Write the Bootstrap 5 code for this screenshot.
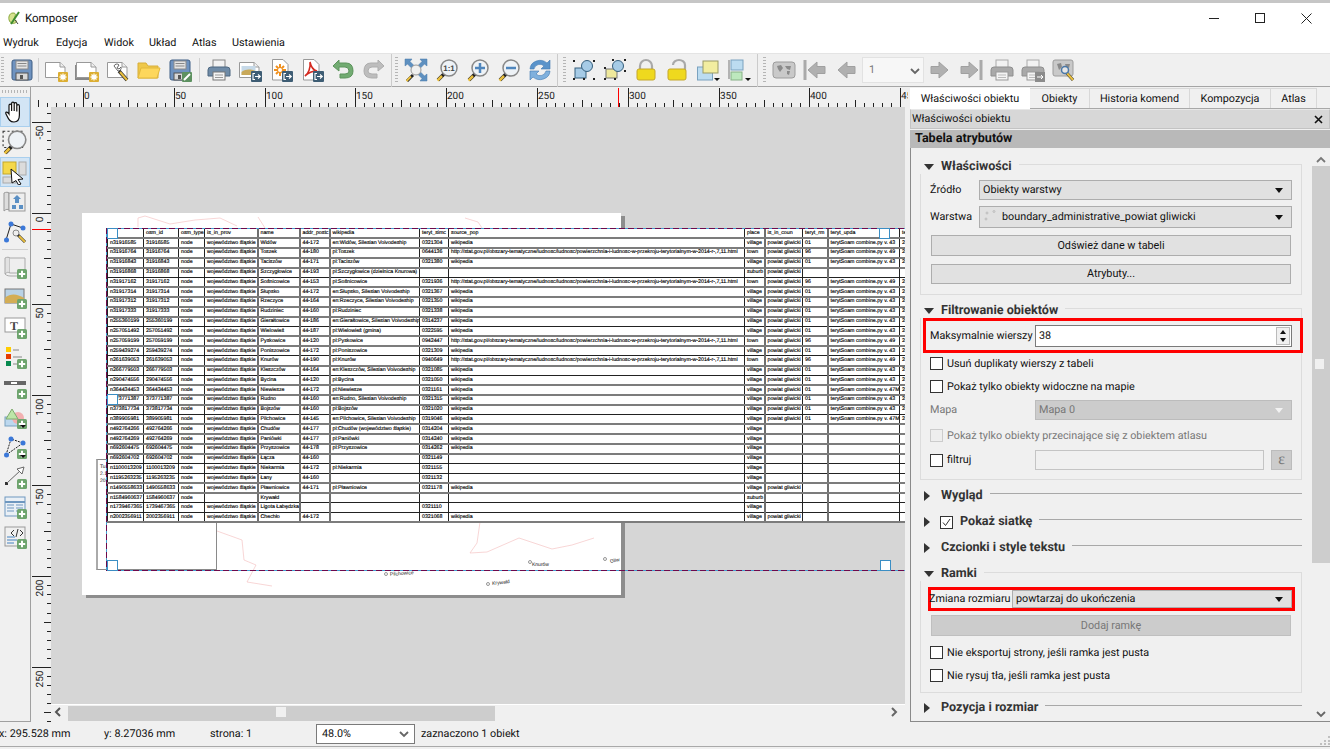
<!DOCTYPE html>
<html lang="pl">
<head>
<meta charset="utf-8">
<title>Komposer</title>
<link href="https://cdn.jsdelivr.net/npm/bootstrap@5.3.3/dist/css/bootstrap.min.css" rel="stylesheet">
<style>
  html, body { height: 749px; overflow: hidden; }
  body { background: #f0f0f0; color: #111; font: 10.8px/14px Roboto, "Noto Sans", sans-serif; text-rendering: geometricPrecision; }

  .win-top { height: 36px; background: #fff; border-top: 3px solid #c6c6c6; padding: 0 1px 3px 7px; }
  .win-top .ttl { margin-left: 4px; font-size: 11.5px; }
  .win-btns { margin-left: auto; }
  .win-btns span { width: 46px; height: 30px; display: flex; align-items: center; justify-content: center; }
  .menu-bar { height: 17px; background: #fff; padding: 0 0 3px 3px; }
  .mi-1 { width: 53px; } .mi-2 { width: 48px; } .mi-3 { width: 45px; } .mi-4 { width: 43px; } .mi-5 { width: 40px; }

  .tool-bar { height: 34px; border-top: 1px solid #e4e4e4; border-bottom: 1px solid #a5a5a5; }
  .grip { width: 3px; height: 26px; margin: 0 2px 0 1px; background: repeating-linear-gradient(#b5b5b5 0 1px, transparent 1px 3px); flex: none; }
  .tb { width: 31px; height: 28px; display: flex; align-items: center; justify-content: center; flex: none; }
  .vsep { width: 1px; height: 24px; background: #cfcfcf; margin: 0 1px; flex: none; }
  .vsep.wide { margin: 0 3.5px; }
  .tb-end { width: 1px; height: 33px; background: #cbcbcb; margin: 0 2px; flex: none; }
  .tb-end.e2 { margin: 0 4px 0 2px; }
  .tb-end.e3 { margin: 0 4px 0 3px; }
  .page-spin { width: 62px; height: 26px; background: #f7f7f7; border: 1px solid #e2e2e2; color: #777; padding: 5px 0 0 6px; position: relative; flex: none; margin-left: 1px; }
  .spin-chev { position: absolute; right: 3px; top: 8px; }

  .main-row { height: 635px; }
  .side-bar { width: 31px; border-right: 1px solid #a0a0a0; border-bottom: 1px solid #a0a0a0; flex: none; }
  .side-grip { height: 3px; margin: 3px 2px 4px; background: repeating-linear-gradient(90deg, #b5b5b5 0 1px, transparent 1px 3px); }
  .sb { height: 30px; width: 30px; display: flex; align-items: center; justify-content: center; border: 1px solid transparent; }
  .sb.on { background: #d3e5f5; border-color: #a9cfee; }
  .side-sep { height: 1px; background: #d0d0d0; margin: 2px; }

  .center-col { width: 877px; flex: none; }
  .ruler-top { height: 20px; display: block; }
  .ruler-left { width: 20px; height: 615px; display: block; flex: none; }
  .canvas-area { width: 854px; height: 598px; background: #d6d6d6; border-bottom: 1px solid #fff; position: relative; overflow: hidden; }
  .h-scroll { height: 15px; width: 854px; position: relative; }
  .h-track { position: absolute; left: 17px; top: 1px; width: 427px; height: 15px; background: #cdcdcd; }
  .h-thumb { position: absolute; left: 225px; top: 2px; width: 10px; height: 10px; background: #f0f0f0; }
  .h-l, .h-r { position: absolute; top: 0; }
  .h-l { left: 2px; } .h-r { left: 838px; }

  .sheet { position: absolute; left: 31px; top: 106px; width: 539px; height: 382px; background: #fff; box-shadow: 4px 3px 0 #8d8d8d; }
  .map-lines { position: absolute; left: 0; top: 0; }
  .legend-box { position: absolute; left: 45px; top: 352px; width: 121px; height: 111px; background: #fff; border: 1px solid #8a8a8a; border-left: 2px solid #aaa; font: 5px/7px "Liberation Sans", sans-serif; padding: 4px 0 0 2px; }
  .attr-wrap { position: absolute; left: 56px; top: 121px; }
  .attr-tbl { table-layout: fixed; width: 818px; background: #fff; font: 5.25px/7px "Liberation Sans", sans-serif; color: #000; -webkit-text-stroke: .15px #000; }
  .attr-tbl td { height: 9.8px; padding: 0 0 0 2px; border-right: 1px solid #222; border-bottom: 1px solid #222; white-space: nowrap; overflow: hidden; }
  .attr-tbl tr.gl td { border-bottom: 2px solid #7c7c7c; }
  .attr-tbl td:nth-child(4), .attr-tbl td:nth-child(5), .attr-tbl td:nth-child(6), .attr-tbl td:nth-child(10), .attr-tbl td:nth-child(12) { border-right-color: #6f6f6f; border-right-width: 2px; }
  .attr-tbl tr:first-child td { border-top: 1px solid #222; }
  .attr-tbl td:first-child { border-left: 1px solid #222; }
  .sel-h, .sel-v { position: absolute; }
  .sel-h { height: 1px; left: 55px; width: 800px; background: repeating-linear-gradient(90deg, #6d0a4c 0 6px, #43a0d0 6px 9px); }
  .sel-h.top { top: 121px; } .sel-h.bot { top: 463px; }
  .sel-v { width: 1px; left: 55px; top: 121px; height: 342px; background: repeating-linear-gradient(#6d0a4c 0 6px, #43a0d0 6px 9px); }
  .handle { position: absolute; width: 11px; height: 11px; background: #fff; border: 1px solid #3b8ec4; }
  .hd-tl { left: 56px; top: 121px; } .hd-ml { left: 56px; top: 287px; } .hd-bl { left: 56px; top: 453px; }
  .hd-tr { left: 828px; top: 121px; } .hd-br { left: 829px; top: 453px; }
  .map-txt { position: absolute; font: 5px/6px "Liberation Sans", sans-serif; color: #111; white-space: nowrap; }
  .mt-a { left: 339px; top: 464px; transform: rotate(-4deg); }
  .mt-b { left: 441px; top: 473px; transform: rotate(-6deg); }
  .mt-c { left: 481px; top: 455px; }
  .mt-d { left: 559px; top: 451px; transform: rotate(-10deg); }

  .dock { width: 422px; padding-left: 2px; flex: none; }
  .dock-tabs { height: 21px; margin-top: 1px; border-bottom: 1px solid #a8a8a8; }
  .dtab { height: 20px; display: flex; align-items: center; justify-content: center; border: 1px solid #d8d8d8; border-bottom: 0; border-left: 0; flex: none; }
  .dtab.act { background: #fff; border: 0; height: 21px; }
  .dt-1 { width: 120px; } .dt-2 { width: 60px; } .dt-3 { width: 100px; } .dt-4 { width: 81px; } .dt-5 { width: 46px; }
  .dock-head { height: 20px; background: #d7d7d7; border: 1px solid #c3c3c3; border-top-color: #e8e8e8; padding: 0 6px 0 1px; }
  .dock-title { height: 18px; margin-top: 1px; background: #b9b9b9; font-weight: 700; font-size: 12.6px; padding-left: 5px; }
  .dock-body { height: 574px; border-left: 1px solid #8a8a8a; border-bottom: 1px solid #8a8a8a; overflow: hidden; }
  .dock-scroll { width: 401px; padding-top: 16px; flex: none; }
  .v-scroll { width: 18px; position: relative; flex: none; }
  .v-track { position: absolute; left: 0; top: 18px; width: 18px; height: 397px; background: #cdcdcd; }
  .v-thumb { position: absolute; left: 3px; top: 211px; width: 9px; height: 10px; background: #f0f0f0; }
  .v-up, .v-dn { position: absolute; left: 4px; }
  .v-up { top: 7px; } .v-dn { top: 561px; }

  .grp { margin-left: 9px; width: 382px; border: 1px solid #dcdcdc; }
  .sect { height: 14px; font-weight: 700; font-size: 12.6px; color: #333; background: #f0f0f0; width: fit-content; padding: 0 7px 0 2px; margin: -5px 0 0 -1px; position: relative; }
  .sect.up { margin-top: -6px; }
  .tri-d { width: 0; height: 0; border: 5.5px solid transparent; border-top: 6px solid #333; border-bottom: 0; margin: 0 7px 0 2px; }
  .sect-row { height: 14px; margin-left: 13px; font-weight: 700; font-size: 12.6px; color: #333; width: 378px; }
  .tri-r { width: 0; height: 0; border: 5.5px solid transparent; border-left: 6.5px solid #333; border-right: 0; margin-right: 11px; flex: none; }
  .sect-line { flex: 1; height: 1px; background: #a8a8a8; margin: -5px 0 0 7px; }
  .frow { margin: 0 9px; }
  .inset { margin-left: 10px; margin-right: 10px; }
  .tm-4 { margin-top: 4px; } .tm-6 { margin-top: 6px; } .tm-7 { margin-top: 7px; } .tm-8 { margin-top: 8px; } .tm-9 { margin-top: 9px; }
  .tm-10 { margin-top: 10px; } .tm-12 { margin-top: 12px; } .tm-13 { margin-top: 13px; } .tm-17 { margin-top: 17px; }
  .bm-9 { margin-bottom: 9px; } .bm-10 { margin-bottom: 10px; }
  .lbl-s { width: 49px; flex: none; } .lbl-m { width: 105px; flex: none; }
  .combo { height: 20px; background: #e1e1e1; border: 1px solid #adadad; padding: 0 5px 0 3px; }
  .combo.h22 { height: 22px; } .combo.h18 { height: 18px; }
  .combo .fill { flex: 1; }
  .layer-ico { margin-right: 5px; flex: none; }
  .caret-d { width: 0; height: 0; border: 4.5px solid transparent; border-top: 5px solid #111; border-bottom: 0; margin-right: 3px; }
  .combo.off { background: #ccc; border-color: #bcbcbc; color: #777; }
  .combo.off .caret-d { border-top-color: #f2f2f2; }
  .qbtn.btn { display: block; height: 21px; width: 100%; padding: 0; border: 1px solid #adadad; border-radius: 0; background: #e1e1e1; color: #111; font-size: 10.8px; line-height: 18px; opacity: 1; }
  .qbtn.btn.h20 { height: 20px; }
  .qbtn.btn:disabled { background: #ccc; border-color: #bfbfbf; color: #777; }
  .red-a { height: 35px; width: 380px; margin-left: 2px; border: 3px solid #f00; padding: 0 8px 0 4px; white-space: nowrap; }
  .red-b { height: 24px; width: 367px; margin-left: 7px; border: 3px solid #f00; }
  .red-lbl { width: 83px; margin-left: -2px; white-space: nowrap; flex: none; }
  .spin { width: 257px; height: 22px; background: #fff; border: 1px solid #7a7a7a; padding-left: 3px; position: relative; margin-left: auto; flex: none; }
  .spin-ud { position: absolute; right: 1px; top: 1px; width: 14px; height: 18px; border: 1px solid #bbb; background: #f0f0f0; display: flex; flex-direction: column; align-items: center; justify-content: space-around; }
  .up-m { border: 3.5px solid transparent; border-bottom: 4px solid #111; border-top: 0; }
  .dn-m { border: 3.5px solid transparent; border-top: 4px solid #111; border-bottom: 0; }
  .qcheck.form-check-input { width: 13px; height: 13px; margin: 0 4px 0 0; border: 1px solid #333; border-radius: 0; background-color: #fff; flex: none; }
  .qcheck.form-check-input:disabled { opacity: 1; border-color: #ccc; background-color: #eee; }
  .chk-row { height: 13px; }
  .is-off { color: #787878; }
  .tick-box { width: 13px; height: 13px; border: 1px solid #333; background: #fff; flex: none; margin: 0 7px 0 -1px; display: flex; }
  .f-input { width: 229px; height: 20px; background: #f0f0f0; border: 1px solid #c4c4c4; margin-left: auto; flex: none; }
  .eps { width: 21px; height: 20px; margin-left: 7px; background: #ccc; border: 1px solid #bcbcbc; color: #777; font: 16px/17px "Liberation Serif", serif; text-align: center; flex: none; }

  .status-bar { height: 25px; border-bottom: 1px solid #a9a9a9; position: relative; }
  .status-bar > span { white-space: nowrap; }
  .st-x { margin-left: -1px; width: 105px; } .st-y { width: 106px; } .st-p { width: 106px; }
  .zoom-combo { width: 99px; height: 20px; background: #fff; border: 1px solid #7a7a7a; padding-left: 5px; margin-right: 6px; }
  .chev { margin-left: auto; margin-right: 5px; }
  .size-grip { position: absolute; right: 0; bottom: 1px; }
</style>
</head>
<body>

<!-- icon set -->
<svg width="0" height="0" class="position-absolute">
  <defs>
    <symbol id="floppy" viewBox="0 0 24 24"><rect x="2" y="2" width="20" height="20" rx="2" fill="#6f93c0" stroke="#3f5f85"/><rect x="6" y="3" width="12" height="8" fill="#e4e4e4" stroke="#8a8a8a"/><path d="M7.5 5.5h9M7.5 8h9" stroke="#888"/><rect x="6" y="15" width="12" height="7" fill="#d8d8d8" stroke="#555"/><rect x="10" y="17" width="3" height="4" fill="#555"/></symbol>
    <symbol id="sheet" viewBox="0 0 24 24"><path d="M1.500 4.500H16L21 9V19.500H1.500Z" fill="#fff" stroke="#999"/><path d="M16 4.500V9H21" fill="#eee" stroke="#999"/></symbol>
    <symbol id="b-star" viewBox="0 0 24 24"><rect x="14" y="14" width="10" height="10" rx="1" fill="#dcae32"/><path d="M19 15.500V22.500M15.500 19H22.500M16.500 16.500L21.500 21.500M21.500 16.500L16.500 21.500" stroke="#fff" stroke-width="1.300"/></symbol>
    <symbol id="b-out" viewBox="0 0 24 24"><rect x="13" y="13" width="11" height="11" rx="1" fill="#3e5d74"/><path d="M17 15.500H15V21.500H17M17 18.500H22M20 16.500L22.300 18.500L20 20.500" fill="none" stroke="#fff" stroke-width="1.100"/></symbol>
    <symbol id="b-plus" viewBox="0 0 24 24"><rect x="14" y="14" width="10" height="10" rx="1.500" fill="#6ea46e"/><path d="M19 15.800V22.200M15.800 19H22.200" stroke="#fff" stroke-width="2"/></symbol>
    <symbol id="lens" viewBox="0 0 24 24"><path d="M3 22L9 16" stroke="#222" stroke-width="3.500"/><path d="M2.500 22.500L7 18" stroke="#e9bf3f" stroke-width="2.500"/><circle cx="14" cy="10" r="8" fill="#eef2f6" stroke="#888" stroke-width="1.500"/></symbol>
    <symbol id="printer" viewBox="0 0 24 24"><rect x="6" y="2" width="12" height="8" fill="#f2f2f2" stroke="#888"/><path d="M4 9H20Q23 9 23 12V18H1V12Q1 9 4 9Z" fill="#6f8ba7" stroke="#4d6780"/><rect x="6" y="14" width="12" height="8" fill="#f4f4f4" stroke="#777"/><path d="M8 17H16M8 19.500H16" stroke="#999"/></symbol>
    <symbol id="printer-g" viewBox="0 0 24 24"><rect x="6" y="2" width="12" height="8" fill="#f2f2f2" stroke="#aaa"/><path d="M4 9H20Q23 9 23 12V18H1V12Q1 9 4 9Z" fill="#a9a9a9" stroke="#8f8f8f"/><rect x="6" y="14" width="12" height="8" fill="#f4f4f4" stroke="#999"/><path d="M8 17H16M8 19.500H16" stroke="#bbb"/></symbol>
    <symbol id="padlock" viewBox="0 0 24 24"><path d="M6 12V8A6 6 0 0 1 18 8V12" fill="none" stroke="#a9a9a9" stroke-width="2.200"/><rect x="3" y="11" width="18" height="11" rx="2" fill="#efd91e" stroke="#c5a72a"/></symbol>
    <symbol id="padlock-o" viewBox="0 0 24 24"><path d="M8 7A6 5 0 0 1 20 7V12H15" fill="none" stroke="#a9a9a9" stroke-width="2.200"/><rect x="3" y="11" width="18" height="11" rx="2" fill="#efd91e" stroke="#c5a72a"/></symbol>
    <symbol id="nav-l" viewBox="0 0 24 24"><path d="M4 12L13 4V8.500H21V15.500H13V20Z" fill="#b0b0b0" stroke="#a0a0a0"/></symbol>
    <symbol id="nav-first" viewBox="0 0 24 24"><path d="M2 2V22" stroke="#aaa" stroke-width="3"/><path d="M5 12L14 4V8.500H22V15.500H14V20Z" fill="#b0b0b0" stroke="#a0a0a0"/></symbol>
    <symbol id="nav-r" viewBox="0 0 24 24"><path d="M20 12L11 4V8.500H3V15.500H11V20Z" fill="#b0b0b0" stroke="#a0a0a0"/></symbol>
    <symbol id="nav-last" viewBox="0 0 24 24"><path d="M22 2V22" stroke="#aaa" stroke-width="3"/><path d="M19 12L10 4V8.500H2V15.500H10V20Z" fill="#b0b0b0" stroke="#a0a0a0"/></symbol>
    <symbol id="chev-l" viewBox="0 0 10 10"><path d="M7 1L3 5L7 9" fill="none" stroke="#555" stroke-width="2"/></symbol>
    <symbol id="chev-r" viewBox="0 0 10 10"><path d="M3 1L7 5L3 9" fill="none" stroke="#666" stroke-width="2"/></symbol>
    <symbol id="chev-u" viewBox="0 0 10 10"><path d="M1 7L5 3L9 7" fill="none" stroke="#777" stroke-width="1.800"/></symbol>
    <symbol id="chev-d" viewBox="0 0 10 10"><path d="M1 3L5 7L9 3" fill="none" stroke="#666" stroke-width="1.800"/></symbol>
  </defs>
</svg>

<!-- window title -->
<div class="win-top d-flex align-items-center">
  <svg width="14" height="16" viewBox="0 0 14 16"><path d="M6 3C2 3 1 8 2.500 11C4 14 8 14 10 11.500L7 9C8 6 10 3 6 3Z" fill="#d5e28f" stroke="#8aa83a"/><path d="M4 14L12 2" stroke="#3d8b2f" stroke-width="2"/><path d="M11 14L8 10" stroke="#444"/></svg>
  <span class="ttl">Komposer</span>
  <div class="win-btns d-flex">
    <span><svg width="11" height="11"><path d="M0 5.500H10" stroke="#222"/></svg></span>
    <span><svg width="11" height="11"><rect x=".5" y=".5" width="9" height="9" fill="none" stroke="#222"/></svg></span>
    <span><svg width="11" height="11"><path d="M.5 .5L10.500 10.500M10.500 .5L.5 10.500" stroke="#222"/></svg></span>
  </div>
</div>

<!-- menu -->
<div class="menu-bar d-flex align-items-center">
  <span class="mi-1">Wydruk</span>
  <span class="mi-2">Edycja</span>
  <span class="mi-3">Widok</span>
  <span class="mi-4">Układ</span>
  <span class="mi-5">Atlas</span>
  <span>Ustawienia</span>
</div>

<!-- main toolbar -->
<div class="tool-bar d-flex align-items-center">
  <i class="grip"></i>
  <div class="tb"><svg width="24" height="24"><use href="#floppy"/></svg></div>
  <i class="vsep"></i>
  <div class="tb"><svg width="24" height="24"><use href="#sheet"/><use href="#b-star"/></svg></div>
  <div class="tb"><svg width="24" height="24"><path d="M1 7V21H17" fill="none" stroke="#888" stroke-width="2"/><use href="#sheet"/><use href="#b-star"/></svg></div>
  <div class="tb"><svg width="24" height="24"><use href="#sheet"/><path d="M8 8A3 3 0 0 1 13 7L11 10L13 11L15 9A3 3 0 0 1 12 13Z" fill="#fff" stroke="#666"/><path d="M13 13L21 22" stroke="#333" stroke-width="3.500"/><path d="M14 14L21 22" stroke="#e9bf3f" stroke-width="2"/></svg></div>
  <div class="tb"><svg width="24" height="24"><path d="M1 5H9L11 8H21V20H1Z" fill="#efc84a" stroke="#d8ae3a"/><path d="M4 10H23L20 20H1Z" fill="#fdd75c" stroke="#e2b93d"/></svg></div>
  <div class="tb"><svg width="24" height="24"><use href="#floppy"/><rect x="14" y="14" width="10" height="10" rx="1" fill="#5d9160"/><path d="M16 22L22 16" stroke="#fff" stroke-width="2"/></svg></div>
  <i class="vsep wide"></i>
  <div class="tb"><svg width="24" height="24"><use href="#printer"/></svg></div>
  <div class="tb"><svg width="24" height="24"><use href="#sheet"/><rect x="3.500" y="8" width="14" height="9" fill="#c6d9e8"/><path d="M3.500 17V14C8 11 12 11 17.500 13V17Z" fill="#c9a95a"/><use href="#b-out"/></svg></div>
  <div class="tb"><svg width="24" height="24"><path d="M3.500 1.500H14L19 6.500V22H3.500Z" fill="#fff" stroke="#999"/><g stroke="#f0901e" stroke-width="2"><path d="M11 6V18M5 12H17M7 8L15 16M15 8L7 16"/></g><circle cx="11" cy="12" r="2" fill="#fff"/><use href="#b-out"/></svg></div>
  <div class="tb"><svg width="24" height="24"><path d="M3.500 1.500H14L19 6.500V22H3.500Z" fill="#fff" stroke="#999"/><path d="M10 4C11 10 8 16 5 18C9 14 13 13 17 13C13 12 11 9 10 4Z" fill="none" stroke="#d42a20" stroke-width="1.600"/><use href="#b-out"/></svg></div>
  <div class="tb"><svg width="24" height="24"><path d="M2 8L8 2V5H15Q22 5 22 13Q22 20 14 20H9V16H14Q18 16 18 13Q18 9 14 9H8V13Z" fill="#72ab72" stroke="#5c945c"/></svg></div>
  <div class="tb"><svg width="24" height="24"><path d="M22 8L16 2V5H9Q2 5 2 13Q2 20 10 20H15V16H10Q6 16 6 13Q6 9 10 9H16V13Z" fill="#bdbdbd" stroke="#adadad"/></svg></div>
  <i class="tb-end"></i>
  <i class="grip"></i>
  <div class="tb"><svg width="24" height="24"><path d="M1 1H8L6 3.500L10 7.500L7.500 10L3.500 6L1 8ZM23 1V8L20.500 6L16.500 10L14 7.500L18 3.500L16 1ZM23 23H16L18 20.500L14 16.500L16.500 14L20.500 18L23 16Z" fill="#5e90c0" stroke="#4878a8" stroke-width=".5"/><path d="M3 23L9 17" stroke="#222" stroke-width="3"/><path d="M2.500 23L7 18.500" stroke="#e9bf3f" stroke-width="2"/><circle cx="12" cy="12" r="5" fill="#f0f0f0" stroke="#999"/></svg></div>
  <div class="tb"><svg width="24" height="24"><use href="#lens"/><text x="14" y="13" font-size="8" font-weight="700" text-anchor="middle" font-family="Liberation Sans" fill="#444">1:1</text></svg></div>
  <div class="tb"><svg width="24" height="24"><use href="#lens"/><path d="M14 5V15M9 10H19" stroke="#4f86bd" stroke-width="2.500"/></svg></div>
  <div class="tb"><svg width="24" height="24"><use href="#lens"/><path d="M9 10H19" stroke="#4f86bd" stroke-width="2.500"/></svg></div>
  <div class="tb"><svg width="24" height="24"><path d="M2 11A10 9 0 0 1 19 5L22 2V11H13L16 8A6 6 0 0 0 6 11Z" fill="#5a93ca" stroke="#3f79b2" stroke-width=".6"/><path d="M22 13A10 9 0 0 1 5 19L2 22V13H11L8 16A6 6 0 0 0 18 13Z" fill="#7fb0dd" stroke="#3f79b2" stroke-width=".6"/></svg></div>
  <i class="tb-end e2"></i>
  <i class="grip"></i>
  <div class="tb"><svg width="24" height="24"><rect x="3" y="10" width="11" height="10" fill="#a6cbe6" stroke="#37607e"/><circle cx="15" cy="8" r="5.500" fill="#a6cbe6" stroke="#37607e"/><path d="M1 2h2v2H1zM21 2h2v2h-2zM1 20h2v2H1zM21 20h2v2h-2zM11 20h2v2h-2z" fill="#222"/></svg></div>
  <div class="tb"><svg width="24" height="24"><rect x="3" y="11" width="11" height="9" fill="#efe99c" stroke="#777"/><circle cx="15" cy="8" r="5.500" fill="#a6cbe6" stroke="#37607e"/><path d="M1 9h2v2H1zM9 1h2v2H9zM21 1h2v2h-2zM1 20h2v2H1zM21 12h2v2h-2zM11 20h2v2h-2z" fill="#222"/></svg></div>
  <div class="tb"><svg width="24" height="24"><use href="#padlock"/></svg></div>
  <div class="tb"><svg width="24" height="24"><use href="#padlock-o"/></svg></div>
  <div class="tb"><svg width="24" height="24"><rect x="1.500" y="9" width="15" height="13" fill="#bcdcf0" stroke="#7aa2bf"/><rect x="7" y="3" width="15" height="12" fill="#f2eda0" stroke="#9a9a66"/><path d="M18 20H24L21 23Z" fill="#111"/></svg></div>
  <div class="tb"><svg width="24" height="24"><path d="M2 2V21" stroke="#777"/><rect x="4" y="2" width="12" height="10" fill="#bcdcf0" stroke="#7aa2bf"/><rect x="4" y="14" width="11" height="8" fill="#bde8bd" stroke="#86b086"/><path d="M18 20H24L21 23Z" fill="#111"/></svg></div>
  <i class="tb-end e3"></i>
  <i class="grip"></i>
  <div class="tb"><svg width="24" height="24"><rect x="1" y="4" width="22" height="16" rx="3" fill="#c9c9c9" stroke="#9c9c9c"/><path d="M5 8L9 7L11 10L8 14L6 11ZM13 8L19 8L18 12L15 11ZM15 13L18 13L17 17L15 16Z" fill="#8a8a8a"/></svg></div>
  <div class="tb"><svg width="24" height="24"><use href="#nav-first"/></svg></div>
  <div class="tb"><svg width="24" height="24"><use href="#nav-l"/></svg></div>
  <div class="page-spin">1<svg class="spin-chev" width="10" height="10"><use href="#chev-d"/></svg></div>
  <div class="tb"><svg width="24" height="24"><use href="#nav-r"/></svg></div>
  <div class="tb"><svg width="24" height="24"><use href="#nav-last"/></svg></div>
  <div class="tb"><svg width="24" height="24"><use href="#printer-g"/></svg></div>
  <div class="tb"><svg width="24" height="24"><use href="#printer-g"/><rect x="14" y="14" width="10" height="10" fill="#8b8b8b"/><path d="M16 19H22M20 17L22 19L20 21" fill="none" stroke="#fff"/></svg></div>
  <div class="tb"><svg width="24" height="24"><rect x="1" y="2" width="20" height="16" rx="2" fill="#c9c9c9" stroke="#9c9c9c"/><path d="M5 6L9 5L10 9L7 12ZM13 6H18L17 10L14 9Z" fill="#8a8a8a"/><path d="M13 13L21 22" stroke="#333" stroke-width="3"/><path d="M14 14L21 22" stroke="#e9bf3f" stroke-width="2"/><circle cx="13" cy="12" r="3.500" fill="#e6e6e6" stroke="#4a78a8" stroke-width="1.500"/></svg></div>
</div>

<div class="main-row d-flex">
  <!-- left tools -->
  <div class="side-bar">
    <div class="side-grip"></div>
    <div class="sb on"><svg width="24" height="24" viewBox="0 0 24 24"><path d="M6 12V5.500A1.300 1.300 0 0 1 8.600 5.500V11V3.500A1.300 1.300 0 0 1 11.200 3.500V11V4A1.300 1.300 0 0 1 13.800 4V11.500V6A1.300 1.300 0 0 1 16.400 6V15C16.400 19 15 22 11 22C7 22 6 20 3 14C2 12 4 11 6 14Z" fill="#fff" stroke="#111" stroke-width="1.200"/></svg></div>
    <div class="sb"><svg width="26" height="26" viewBox="0 0 24 24"><rect x="1" y="2" width="18" height="15" fill="none" stroke="#333" stroke-dasharray="2 2"/><use href="#lens"/></svg></div>
    <div class="sb on"><svg width="26" height="26" viewBox="0 0 26 26"><rect x="1" y="3" width="13" height="12" fill="#f4d84a" stroke="#c5a72a"/><rect x="17" y="3" width="7" height="13" fill="#dcdcdc" stroke="#aaa"/><rect x="1" y="18" width="13" height="6" fill="#dcdcdc" stroke="#aaa"/><path d="M9 10L21 20L16 20.500L19 25L16.500 26L14 21.500L10 24Z" fill="#fff" stroke="#111"/></svg></div>
    <div class="sb"><svg width="24" height="24" viewBox="0 0 24 24"><path d="M1 3C3 2 5 2 6 3V20C5 19 3 19 1 21Z" fill="#ddd" stroke="#999"/><rect x="6" y="3" width="16" height="18" fill="#eee" stroke="#999"/><path d="M14 5L18 9H16V13H12V9H10Z" fill="#5a8fc4"/><path d="M9 15h4v4H9zM16 15h4v4h-4z" fill="#5a8fc4"/></svg></div>
    <div class="sb"><svg width="24" height="24" viewBox="0 0 24 24"><path d="M3 20L8 4L20 8" fill="none" stroke="#222"/><circle cx="3.500" cy="20" r="2.500" fill="#3b78d8"/><circle cx="8" cy="4" r="2.500" fill="#3b78d8"/><circle cx="20" cy="8" r="2.500" fill="#3b78d8"/><circle cx="13" cy="13" r="3" fill="#eee" stroke="#888"/><path d="M15 15L22 22" stroke="#333" stroke-width="3"/><path d="M16 16L22 22" stroke="#e9bf3f" stroke-width="2"/></svg></div>
    <div class="side-sep"></div>
    <div class="sb"><svg width="24" height="24" viewBox="0 0 24 24"><path d="M2 3C4 2 6 2 7 3V18C5 17 4 17 2 19Z" fill="#e2e2e2" stroke="#aaa"/><path d="M7 3H22V18H7" fill="#eee" stroke="#aaa"/><path d="M2 19C4 21 6 21 9 21H22" fill="none" stroke="#aaa"/><use href="#b-plus"/></svg></div>
    <div class="sb"><svg width="24" height="24" viewBox="0 0 24 24"><rect x="2" y="4" width="19" height="14" fill="#b9d2e6" stroke="#777"/><path d="M2 18V13C8 8 14 9 21 13V18Z" fill="#d3ad55"/><use href="#b-plus"/></svg></div>
    <div class="sb"><svg width="24" height="24" viewBox="0 0 24 24"><rect x="2" y="3" width="20" height="14" fill="#fff" stroke="#999"/><text x="11" y="14.500" font-size="12" font-weight="700" text-anchor="middle" font-family="Liberation Serif" fill="#444">T</text><use href="#b-plus"/></svg></div>
    <div class="sb"><svg width="24" height="24" viewBox="0 0 24 24"><rect x="3" y="2" width="5" height="5" fill="#fc0"/><rect x="3" y="9" width="5" height="5" fill="#e63b00"/><rect x="3" y="16" width="5" height="5" fill="#078a4f"/><path d="M10 5H16M10 12H19M10 19H14" stroke="#aaa" stroke-width="1.500"/><use href="#b-plus"/></svg></div>
    <div class="sb"><svg width="24" height="24" viewBox="0 0 24 24"><rect x="1" y="6" width="22" height="4" fill="#666"/><path d="M8 8H14" stroke="#fff" stroke-width="2"/><use href="#b-plus"/></svg></div>
    <div class="sb"><svg width="24" height="24" viewBox="0 0 24 24"><rect x="2" y="12" width="16" height="9" fill="#bcd8ef" stroke="#7aa2bf"/><circle cx="15" cy="13" r="6" fill="#f2b0b0"/><path d="M9 4L3 14H15Z" fill="#bde6a8" stroke="#7faa6e"/><use href="#b-plus"/><path d="M17 20H23L20 23Z" fill="#111"/></svg></div>
    <div class="sb"><svg width="24" height="24" viewBox="0 0 24 24"><path d="M3 20L8 4L20 8L3 20" fill="none" stroke="#222" stroke-dasharray="2 1"/><circle cx="3.500" cy="20" r="2.500" fill="#3b78d8"/><circle cx="8" cy="4" r="2.500" fill="#3b78d8"/><circle cx="20" cy="8" r="2.500" fill="#3b78d8"/><use href="#b-plus"/><path d="M17 20H23L20 23Z" fill="#111"/></svg></div>
    <div class="sb"><svg width="24" height="24" viewBox="0 0 24 24"><rect x="2" y="17" width="3" height="3" fill="#333"/><path d="M4 18L18 5" stroke="#666"/><path d="M21 2L19 9L14 4Z" fill="#fff" stroke="#666"/><use href="#b-plus"/></svg></div>
    <div class="sb"><svg width="24" height="24" viewBox="0 0 24 24"><rect x="2" y="2" width="20" height="19" fill="#eaf0f6" stroke="#6e97bf"/><path d="M2 7H22" stroke="#6e97bf" stroke-width="2"/><path d="M4 10H11M13 10H20M4 13H11M13 13H20M4 16H11M13 16H20" stroke="#6e97bf"/><use href="#b-plus"/></svg></div>
    <div class="sb"><svg width="24" height="24" viewBox="0 0 24 24"><rect x="2" y="2" width="20" height="19" fill="#f0f0f0" stroke="#999"/><path d="M4 12H12M4 15H14M4 18H11" stroke="#7ea7cf" stroke-width="1.500"/><path d="M11 5L8 8L11 11M17 5L20 8L17 11M15 4L13 12" fill="none" stroke="#333"/><use href="#b-plus"/></svg></div>
  </div>

  <!-- composer canvas -->
  <div class="center-col">
    <svg class="ruler-top" id="rulerTop" width="877" height="20"></svg>
    <div class="d-flex">
      <svg class="ruler-left" id="rulerLeft" width="20" height="615"></svg>
      <div>
        <div class="canvas-area">
          <div class="sheet">
            <svg class="map-lines" width="539" height="382" fill="none" stroke="#f5c4c4" stroke-width=".7">
              <path d="M56 14L56 5L63 3L88 11L113 7L138 5L155 13"/>
              <path d="M176 4L183 15"/>
              <path d="M383 5L396 9L400 15"/>
              <path d="M135 318L160 327L162 347L174 352L165 369L190 373"/>
              <path d="M398 309L395 330L388 340L405 339L437 325L470 336L490 332L512 325"/>
              <g stroke="#333" stroke-width=".5">
                <circle cx="304" cy="361" r="1.500"/><circle cx="406" cy="371" r="1.500"/><circle cx="448" cy="349" r="1.500"/><circle cx="523" cy="346" r="1.500"/>
              </g>
            </svg>
          </div>
          <div class="legend-box">Tu<br>2.1<br>201</div>
          <div class="attr-wrap"><table class="attr-tbl" id="attrTable"></table></div>
          <span class="map-txt mt-a">Pilchowice</span>
          <span class="map-txt mt-b">Krywałd</span>
          <span class="map-txt mt-c">Knurów</span>
          <span class="map-txt mt-d">Gliw</span>
          <div class="sel-h top"></div>
          <div class="sel-h bot"></div>
          <div class="sel-v"></div>
          <div class="handle hd-tl"></div>
          <div class="handle hd-ml"></div>
          <div class="handle hd-bl"></div>
          <div class="handle hd-tr"></div>
          <div class="handle hd-br"></div>
        </div>
        <div class="h-scroll">
          <div class="h-track"></div>
          <div class="h-thumb"></div>
          <svg class="h-l" width="10" height="14"><use href="#chev-l" y="2" width="10" height="10"/></svg>
          <svg class="h-r" width="10" height="14"><use href="#chev-r" y="2" width="10" height="10"/></svg>
        </div>
      </div>
    </div>
  </div>

  <!-- item properties dock -->
  <div class="dock">
    <div class="dock-tabs d-flex">
      <div class="dtab act dt-1">Właściwości obiektu</div>
      <div class="dtab dt-2">Obiekty</div>
      <div class="dtab dt-3">Historia komend</div>
      <div class="dtab dt-4">Kompozycja</div>
      <div class="dtab dt-5">Atlas</div>
    </div>
    <div class="dock-head d-flex align-items-center justify-content-between">
      <span>Właściwości obiektu</span>
      <svg width="9" height="9"><path d="M1 1L8 8M8 1L1 8" stroke="#111" stroke-width="1.600"/></svg>
    </div>
    <div class="dock-title d-flex align-items-center">Tabela atrybutów</div>
    <div class="dock-body d-flex">
      <div class="dock-scroll">

        <div class="grp">
          <div class="sect d-flex align-items-center"><i class="tri-d"></i>Właściwości</div>
          <div class="frow d-flex align-items-center tm-6">
            <span class="lbl-s">Źródło</span>
            <div class="combo d-flex align-items-center flex-fill"><span class="fill">Obiekty warstwy</span><i class="caret-d"></i></div>
          </div>
          <div class="frow d-flex align-items-center tm-6">
            <span class="lbl-s">Warstwa</span>
            <div class="combo h22 d-flex align-items-center flex-fill">
              <svg class="layer-ico" width="14" height="14"><circle cx="3" cy="9" r="1" fill="none" stroke="#aaa" stroke-width=".6"/><circle cx="4" cy="3" r="1" fill="none" stroke="#aaa" stroke-width=".6"/><circle cx="11" cy="1.500" r="1" fill="none" stroke="#aaa" stroke-width=".6"/></svg>
              <span class="fill">boundary_administrative_powiat gliwicki</span><i class="caret-d"></i>
            </div>
          </div>
          <div class="frow inset tm-7"><button class="qbtn btn" type="button">Odśwież dane w tabeli</button></div>
          <div class="frow inset tm-8 bm-10"><button class="qbtn btn h20" type="button">Atrybuty...</button></div>
        </div>

        <div class="grp tm-13">
          <div class="sect d-flex align-items-center"><i class="tri-d"></i>Filtrowanie obiektów</div>
          <div class="red-a d-flex align-items-center">
            <span>Maksymalnie wierszy</span>
            <div class="spin d-flex align-items-center">38<div class="spin-ud"><i class="up-m"></i><i class="dn-m"></i></div></div>
          </div>
          <div class="frow chk-row d-flex align-items-center tm-4"><input class="qcheck form-check-input" type="checkbox">Usuń duplikaty wierszy z tabeli</div>
          <div class="frow chk-row d-flex align-items-center tm-10"><input class="qcheck form-check-input" type="checkbox">Pokaż tylko obiekty widoczne na mapie</div>
          <div class="frow d-flex align-items-center is-off tm-7">
            <span class="lbl-m">Mapa</span>
            <div class="combo off d-flex align-items-center flex-fill"><span class="fill">Mapa 0</span><i class="caret-d"></i></div>
          </div>
          <div class="frow chk-row d-flex align-items-center is-off tm-9"><input class="qcheck form-check-input" type="checkbox" disabled>Pokaż tylko obiekty przecinające się z obiektem atlasu</div>
          <div class="frow d-flex align-items-center tm-8 bm-9">
            <input class="qcheck form-check-input" type="checkbox">filtruj
            <div class="f-input"></div>
            <div class="eps">ε</div>
          </div>
        </div>

        <div class="sect-row d-flex align-items-center tm-9"><i class="tri-r"></i>Wygląd<i class="sect-line"></i></div>
        <div class="sect-row d-flex align-items-center tm-12"><i class="tri-r"></i>
          <span class="tick-box"><svg width="11" height="11"><path d="M2 5.500L4.500 8.500L9 2" fill="none" stroke="#333"/></svg></span>Pokaż siatkę<i class="sect-line"></i></div>
        <div class="sect-row d-flex align-items-center tm-12"><i class="tri-r"></i>Czcionki i style tekstu<i class="sect-line"></i></div>

        <div class="grp tm-17">
          <div class="sect up d-flex align-items-center"><i class="tri-d"></i>Ramki</div>
          <div class="red-b d-flex align-items-center tm-6">
            <span class="red-lbl">Zmiana rozmiaru</span>
            <div class="combo h18 d-flex align-items-center flex-fill"><span class="fill">powtarzaj do ukończenia</span><i class="caret-d"></i></div>
          </div>
          <div class="frow inset tm-4"><button class="qbtn btn" type="button" disabled>Dodaj ramkę</button></div>
          <div class="frow chk-row d-flex align-items-center tm-10"><input class="qcheck form-check-input" type="checkbox">Nie eksportuj strony, jeśli ramka jest pusta</div>
          <div class="frow chk-row d-flex align-items-center tm-10 bm-10"><input class="qcheck form-check-input" type="checkbox">Nie rysuj tła, jeśli ramka jest pusta</div>
        </div>

        <div class="sect-row d-flex align-items-center tm-8"><i class="tri-r"></i>Pozycja i rozmiar<i class="sect-line"></i></div>
      </div>
      <div class="v-scroll">
        <svg class="v-up" width="10" height="10"><use href="#chev-u"/></svg>
        <div class="v-track"></div>
        <div class="v-thumb"></div>
        <svg class="v-dn" width="10" height="10"><use href="#chev-d"/></svg>
      </div>
    </div>
  </div>
</div>

<!-- status -->
<div class="status-bar d-flex align-items-center">
  <span class="st-x">x: 295.528 mm</span>
  <span class="st-y">y: 8.27036 mm</span>
  <span class="st-p">strona: 1</span>
  <div class="zoom-combo d-flex align-items-center">48.0%<svg class="chev" width="10" height="10"><use href="#chev-d"/></svg></div>
  <span>zaznaczono 1 obiekt</span>
  <svg class="size-grip" width="10" height="10"><path d="M8 1h2v2H8zM4 5h2v2H4zM8 5h2v2H8zM0 8h2v2H0zM4 8h2v2H4zM8 8h2v2H8z" fill="#c0c0c0"/></svg>
</div>

<script>
  // attribute table of the composer item
  const URL_SRC = 'http://stat.gov.pl/obszary-tematyczne/ludnosc/ludnosc/powierzchnia-i-ludnosc-w-przekroju-terytorialnym-w-2014-r-,7,11.html';
  const WOJ = 'województwo śląskie';
  const TERYT = 'terytSoam combine.py v. ';
  const SIL = ', Silesian Voivodeship';
  const header = ['_id','osm_id','osm_type','is_in_prov','name','addr_postc','wikipedia','teryt_simc','source_pop','place','is_in_coun','teryt_rm','teryt_upda','te'];
  const widths = [36,35,26,53,42,30,90,29,296,20,38,25,72,30];
  // osm id, name, postcode, wikipedia, simc, source, place, powiat, rm, teryt version
  const data = [
    ['31916585','Widów','44-172','en:Widów'+SIL,'0321304','w','village',1,'01','43'],
    ['31916764','Toszek','44-180','pl:Toszek','0644136','u','town',1,'96','49'],
    ['31916843','Taciszów','44-171','pl:Taciszów','0321380','w','village',1,'01','43'],
    ['31916868','Szczygłowice','44-193','pl:Szczygłowice (dzielnica Knurowa)','','','suburb',1,'',''],
    ['31917162','Sośnicowice','44-153','pl:Sośnicowice','0321936','u','town',1,'96','49'],
    ['31917314','Słupsko','44-172','en:Słupsko'+SIL,'0321367','w','village',1,'01','43'],
    ['31917312','Rzeczyce','44-164','en:Rzeczyce'+SIL,'0321350','w','village',1,'01','43'],
    ['31917333','Rudziniec','44-160','pl:Rudziniec','0321338','w','village',1,'01','43'],
    ['255360199','Gierałtowice','44-186','en:Gierałtowice'+SIL,'0314237','w','village',1,'01','43'],
    ['257051492','Wielowieś','44-187','pl:Wielowieś (gmina)','0322595','w','village',1,'01','43'],
    ['257059199','Pyskowice','44-120','pl:Pyskowice','0942447','u','town',1,'96','49'],
    ['259439274','Poniszowice','44-172','pl:Poniszowice','0321309','w','village',1,'01','43'],
    ['261639053','Knurów','44-190','pl:Knurów','0940649','u','town',1,'96','49'],
    ['266779503','Kleszczów','44-164','en:Kleszczów'+SIL,'0321085','w','village',1,'01','43'],
    ['290474556','Bycina','44-120','pl:Bycina','0321050','w','village',1,'01','43'],
    ['364434453','Niewiesze','44-172','pl:Niewiesze','0321161','w','village',1,'01','47M'],
    ['373771387','Rudno','44-160','en:Rudno'+SIL,'0321315','w','village',1,'01','43'],
    ['373817734','Bojszów','44-160','pl:Bojszów','0321020','w','village',1,'01','43'],
    ['389905981','Pilchowice','44-145','en:Pilchowice'+SIL,'0319046','w','village',1,'01','47M'],
    ['492764266','Chudów','44-177','pl:Chudów (województwo śląskie)','0314204','w','village',0,'',''],
    ['492764269','Paniówki','44-177','pl:Paniówki','0314240','w','village',0,'',''],
    ['692604475','Przyszowice','44-178','pl:Przyszowice','0314262','w','village',0,'',''],
    ['692604702','Łącza','44-160','','0321149','','village',0,'',''],
    ['1100013209','Niekarmia','44-172','pl:Niekarmia','0321155','','village',0,'',''],
    ['1195263235','Łany','44-160','','0321132','','village',0,'',''],
    ['1490558633','Pławniowice','44-171','pl:Pławniowice','0321178','w','village',1,'',''],
    ['1584960637','Krywałd','','','','','suburb',0,'',''],
    ['1739467365','Ligota Łabędzka','','','0321110','','village',0,'',''],
    ['2002356911','Chechło','44-172','','0321068','w','village',1,'','']
  ];
  // rows whose lower rule falls on a whole pixel stay thin and black
  const thin = [3, 8, 11, 13, 17, 22, 23, 26, 27];

  const table = document.getElementById('attrTable');
  const cols = document.createElement('colgroup');
  widths.forEach(w => {
    const c = document.createElement('col');
    c.style.width = w + 'px';
    cols.appendChild(c);
  });
  table.appendChild(cols);

  function addRow(cells, cls) {
    const tr = table.insertRow();
    if (cls) tr.className = cls;
    cells.forEach(t => { tr.insertCell().textContent = t; });
  }

  addRow(header, 'gl');
  data.forEach((r, i) => {
    const src = r[5] === 'w' ? 'wikipedia' : r[5] === 'u' ? URL_SRC : '';
    const prov = r[1] === 'Krywałd' ? '' : WOJ;
    addRow([
      'n' + r[0], r[0], 'node', prov, r[1], r[2], r[3], r[4], src, r[6],
      r[7] ? 'powiat gliwicki' : '', r[8], r[9] ? TERYT + r[9] : '', r[9] ? '20' : ''
    ], thin.includes(i) ? '' : 'gl');
  });

  // rulers: 50 mm = 90.8 px
  const svgNS = 'http://www.w3.org/2000/svg';
  function put(svg, tag, attrs, text) {
    const el = document.createElementNS(svgNS, tag);
    for (const k in attrs) el.setAttribute(k, attrs[k]);
    if (text !== undefined) el.textContent = text;
    svg.appendChild(el);
  }
  const PX = 1.816;
  const rt = document.getElementById('rulerTop');
  const rl = document.getElementById('rulerLeft');

  for (let u = -25; u <= 460; u += 5) {
    const x = Math.round(52 + u * PX) + .5;
    const big = u % 50 === 0, mid = u % 25 === 0;
    put(rt, 'line', { x1: x, x2: x, y1: big ? 1 : mid ? 13 : 16, y2: 20, stroke: '#222' });
    if (big) put(rt, 'text', { x: x + .5, y: 12, 'font-size': 10, 'font-family': 'Roboto', fill: '#222' }, u);
  }
  put(rt, 'line', { x1: 587.5, x2: 587.5, y1: 1, y2: 20, stroke: '#f00' });

  for (let u = -60; u <= 280; u += 5) {
    const y = Math.round(106 + u * PX) + .5;
    const big = u % 50 === 0, mid = u % 25 === 0;
    if (y < 2) continue;
    put(rl, 'line', { y1: y, y2: y, x1: big ? 1 : mid ? 13 : 16, x2: 20, stroke: '#222' });
    if (big) put(rl, 'text', { transform: 'translate(12 ' + (y + 3) + ') rotate(-90)', 'text-anchor': 'end', 'font-size': 10, 'font-family': 'Roboto', fill: '#222' }, u);
  }
  put(rl, 'line', { y1: 122.5, y2: 122.5, x1: 1, x2: 20, stroke: '#f00' });
</script>
<script src="https://cdn.jsdelivr.net/npm/bootstrap@5.3.3/dist/js/bootstrap.bundle.min.js"></script>
</body>
</html>
